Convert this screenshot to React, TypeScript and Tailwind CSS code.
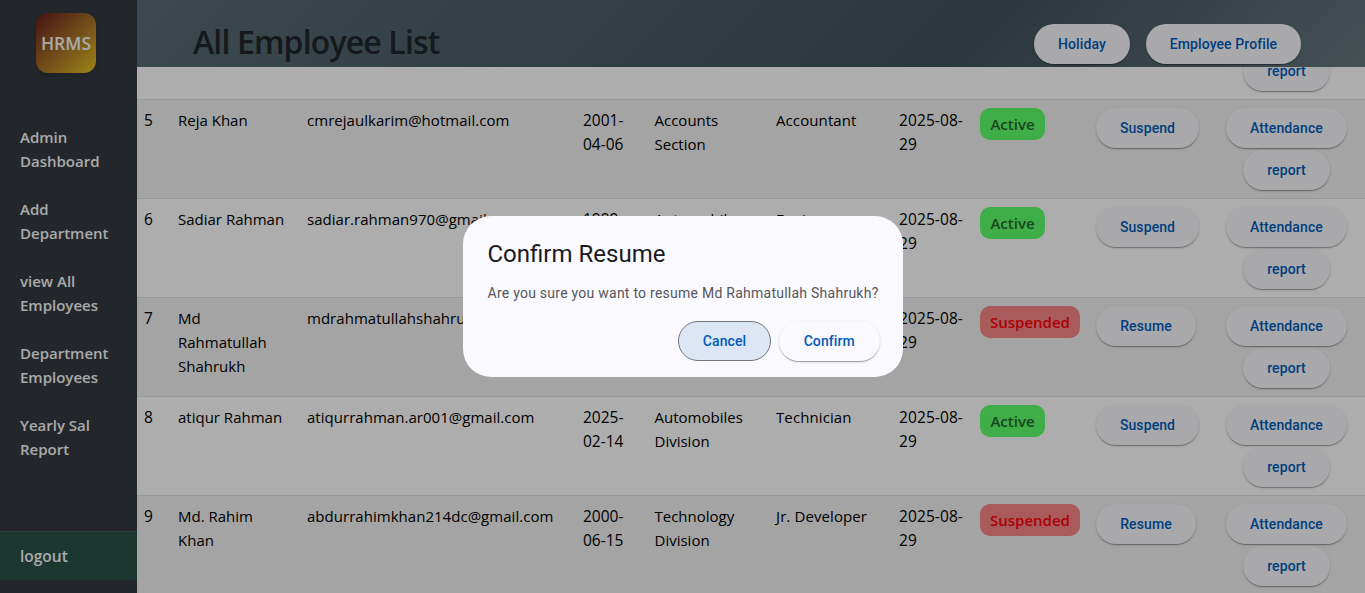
import React from "react";

const SANS = "font-['Open_Sans','Noto_Sans',sans-serif]";

type Row = { id: number; name: string[]; email: string; dob: string[]; dept: string[]; role: string; active: boolean };

const rows: Row[] = [
  { id: 5, name: ["Reja Khan"], email: "cmrejaulkarim@hotmail.com", dob: ["2001-", "04-06"], dept: ["Accounts", "Section"], role: "Accountant", active: true },
  { id: 6, name: ["Sadiar Rahman"], email: "sadiar.rahman970@gmail.com", dob: ["1999-"], dept: ["Automobiles"], role: "Engineer", active: true },
  { id: 7, name: ["Md", "Rahmatullah", "Shahrukh"], email: "mdrahmatullahshahrukh", dob: [], dept: [], role: "", active: false },
  { id: 8, name: ["atiqur Rahman"], email: "atiqurrahman.ar001@gmail.com", dob: ["2025-", "02-14"], dept: ["Automobiles", "Division"], role: "Technician", active: true },
  { id: 9, name: ["Md. Rahim", "Khan"], email: "abdurrahimkhan214dc@gmail.com", dob: ["2000-", "06-15"], dept: ["Technology", "Division"], role: "Jr. Developer", active: false },
];

const links = [["Admin", "Dashboard"], ["Add", "Department"], ["view All", "Employees"], ["Department", "Employees"], ["Yearly Sal", "Report"]];

function Pill({ children, className = "" }: { children: React.ReactNode; className?: string }) {
  return (
    <button className={`flex h-10 shrink-0 items-center justify-center rounded-full bg-[#faf9fd] font-['Roboto',sans-serif] text-sm font-medium tracking-[0.1px] text-[#005cbb] shadow-[0_2px_1px_-1px_rgba(0,0,0,0.2),0_1px_1px_rgba(0,0,0,0.14),0_1px_3px_rgba(0,0,0,0.12)] ${className}`}>
      {children}
    </button>
  );
}

function Lines({ lines }: { lines: string[] }) {
  return <>{lines.map((l) => <div key={l} className="whitespace-nowrap">{l}</div>)}</>;
}

export default function App() {
  return (
    <div className={`relative flex h-[593px] w-[1365px] overflow-hidden bg-white text-[15px] leading-6 text-black ${SANS}`}>
      <aside className="flex w-[137px] shrink-0 flex-col bg-[#343a40] text-[#f8f9fa]">
        <div className="ml-9 mt-[13px] flex size-[60px] shrink-0 items-center justify-center rounded-xl bg-linear-135 from-[#651a1a] to-[#e6c620] text-[17.5px] font-semibold shadow-md">HRMS</div>
        <nav className="mt-[52px] flex flex-col gap-6 pl-5 font-semibold">
          {links.map((l) => <a key={l.join()}><Lines lines={l} /></a>)}
        </nav>
        <div className="mt-[70px] flex h-[49px] shrink-0 items-center border-t border-[#3a6457] bg-[#2a5047] pb-px pl-5 text-[15.5px] font-semibold">logout</div>
      </aside>
      <main className="flex w-[1228px] flex-col">
        <header className="flex h-[67px] shrink-0 bg-linear-135 from-[#586b73] via-[#3f525a] via-67% to-[#65777d] pl-14 pr-16 pt-6">
          <h1 className="-mt-3 whitespace-nowrap text-[32px] leading-[60px] font-semibold tracking-[-0.85px] text-[#212529]">All Employee List</h1>
          <div className="ml-auto flex gap-4">
            <Pill className="w-24">Holiday</Pill>
            <Pill className="w-[155px]">Employee Profile</Pill>
          </div>
        </header>
        <section className="flex flex-col">
          <div className="flex h-[33px] shrink-0 items-end justify-end overflow-hidden border-b border-[#dee2e6] pb-2 pr-[35px]">
            <Pill className="w-[87px]">report</Pill>
          </div>
          {rows.map((r) => (
            <div key={r.id} className="grid h-[99px] shrink-0 grid-cols-[33px_129px_276px_71.5px_121.5px_123px_81px_116px_130px_auto] border-b border-[#dee2e6] pl-2 pt-2 odd:bg-white even:bg-[#f2f2f2]">
              <div className="-ml-px text-[15.5px]">{r.id}</div>
              <div><Lines lines={r.name} /></div>
              <div className="tracking-[0.03px]">{r.email}</div>
              <div className="text-[15.5px]"><Lines lines={r.dob} /></div>
              <div><Lines lines={r.dept} /></div>
              <div className="tracking-[0.1px]">{r.role}</div>
              <div className="text-[15.5px] tracking-[0.1px]"><Lines lines={["2025-08-", "29"]} /></div>
              <div>
                <span className={`flex h-8 items-center justify-center rounded-[10px] font-semibold ${r.active ? "w-[65px] bg-[#5eff6b] text-[#246a2b]" : "w-[100px] bg-[#fa8686] text-[#ff000a]"}`}>{r.active ? "Active" : "Suspended"}</span>
              </div>
              <div><Pill className={r.active ? "w-[103px]" : "w-[100px]"}>{r.active ? "Suspend" : "Resume"}</Pill></div>
              <div className="flex w-[121px] flex-col items-center gap-0.5">
                <Pill className="w-[121px]">Attendance</Pill>
                <Pill className="w-[87px]">report</Pill>
              </div>
            </div>
          ))}
        </section>
      </main>
      <div className="absolute inset-0 bg-black/32">
        <div role="dialog" className="ml-[463px] mt-[216px] flex h-[161px] w-[440px] flex-col rounded-[28px] bg-[#faf9fd] pl-[24.5px] pr-[23.5px] pt-[22px] font-['Roboto',sans-serif]">
          <h2 className="text-2xl leading-8 text-[#1a1b1f]">Confirm Resume</h2>
          <p className="mt-[13px] text-sm leading-5 tracking-[0.25px] whitespace-nowrap text-[#55575e]">Are you sure you want to resume Md Rahmatullah Shahrukh?</p>
          <div className="mt-[18px] flex justify-end gap-2">
            <button className="h-10 w-[93px] rounded-full border border-[#74777f] bg-[#dce6f5] text-sm font-medium tracking-[0.1px] text-[#005cbb]">Cancel</button>
            <Pill className="w-[100.5px]">Confirm</Pill>
          </div>
        </div>
      </div>
    </div>
  );
}
